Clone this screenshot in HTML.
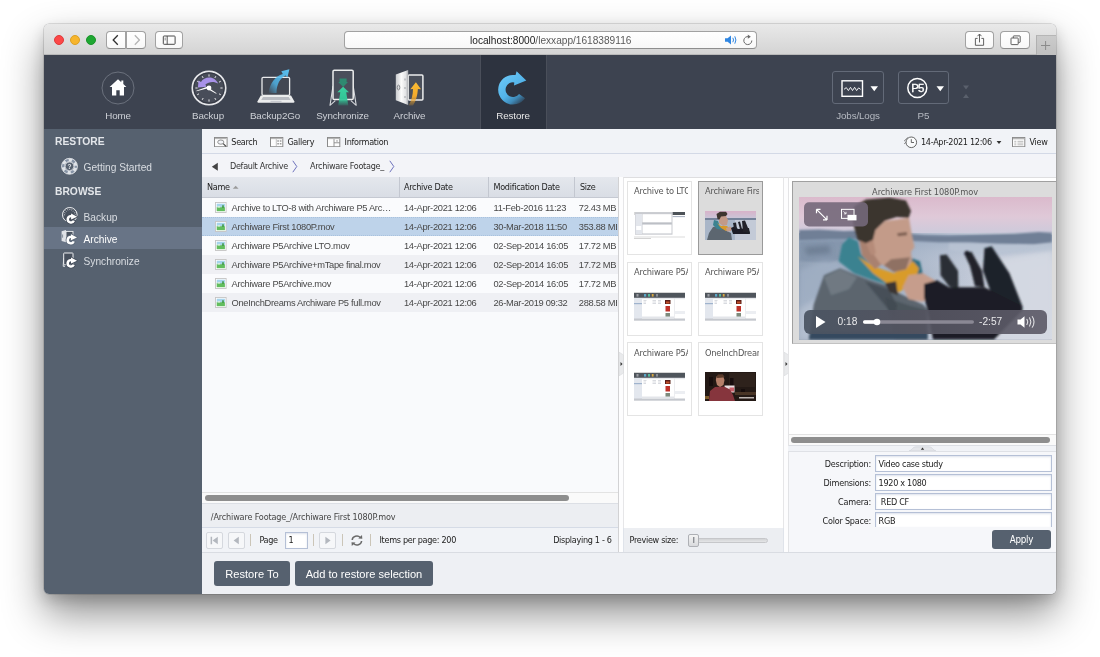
<!DOCTYPE html>
<html lang="en">
<head>
<meta charset="utf-8">
<title>Archiware P5 - Restore</title>
<style>
html,body{margin:0;padding:0;background:#fff;}
body{width:1100px;height:657px;overflow:hidden;position:relative;font-family:"Liberation Sans",sans-serif;}
#win{position:absolute;left:44px;top:24.4px;width:1012px;height:569.6px;border-radius:5px;overflow:hidden;background:#eef0f4;
 box-shadow:0 0 0 .5px rgba(0,0,0,.22),0 20px 40px rgba(0,0,0,.44),0 6px 14px rgba(0,0,0,.16);}
#pg{position:absolute;left:-44px;top:-24.4px;width:1100px;height:657px;will-change:transform;}
#pg div,#pg span,#pg svg{position:absolute;box-sizing:border-box;}
.t{white-space:nowrap;line-height:1;}
.th{font-family:"DejaVu Sans Condensed","DejaVu Sans","Liberation Sans",sans-serif;}
/* title bar */
#tb{left:44px;top:24px;width:1012px;height:31px;background:linear-gradient(#e9e9e9,#d4d4d4);border-bottom:1px solid #b9b9b9;}
.tl{width:10px;height:10px;border-radius:50%;top:35px;}
.sbtn{background:linear-gradient(#fff,#f8f8f8);border:1px solid #a2a2a2;border-bottom-color:#8e8e8e;border-radius:4px;}
/* header */
#hd{left:44px;top:55px;width:1012px;height:74px;background:#3d4350;}
.hl{color:#cdd0d6;font-size:9.8px;letter-spacing:-0.12px;top:110.8px;width:80px;text-align:center;}
/* sidebar */
#sb{left:44px;top:129px;width:158px;height:465px;background:#56616f;}
.sh{color:#e3e6ea;font-weight:bold;font-size:10.3px;left:55px;}
.si{color:#d9dde2;font-size:10.2px;left:83.5px;}
/* content */
#ct{left:202px;top:129px;width:854px;height:465px;background:#f1f3f7;}
.tbt{font-size:9px;letter-spacing:-0.3px;color:#222;}
.row{left:202px;width:416px;height:19.2px;}
.c{font-size:9.3px;letter-spacing:-0.3px;color:#484848;}
.ch{font-size:9px;letter-spacing:-0.3px;color:#222;top:183.2px;}
.thumb{width:65px;height:74px;border:1px solid #e4e4e4;background:#fff;overflow:hidden;}
.thumb .t{left:6px;top:4.4px;font-size:9.2px;letter-spacing:-0.2px;color:#555;width:54px;overflow:hidden;}
.ti{left:6px;top:29px;width:51px;height:29px;}
.lbl{font-size:9px;letter-spacing:-0.22px;color:#222;width:80px;text-align:right;left:791px;}
.inp{left:875px;width:177px;height:17px;background:#fff;border:1px solid #b5c0d6;box-shadow:inset 0 1px 2px rgba(120,140,180,.25);}
.inpt{font-size:9px;letter-spacing:-0.3px;color:#222;}
.btn{background:#56616f;border-radius:3px;color:#fff;font-size:11.1px;text-align:center;}
.sep{width:1px;height:12px;top:534px;background:#cbc5b8;}
.pb{width:17px;height:17px;top:531.5px;border:1px solid #d5d8de;border-radius:2px;background:#f6f7f9;}
</style>
</head>
<body>
<div id="win"><div id="pg">

<!-- ===== TITLE BAR ===== -->
<div id="tb"></div>
<div class="tl" style="left:53.9px;background:#fc4848;border:0.5px solid #df3a3a;"></div>
<div class="tl" style="left:70.3px;background:#f7b52c;border:0.5px solid #dba023;"></div>
<div class="tl" style="left:86px;background:#1ea732;border:0.5px solid #199329;"></div>
<div class="sbtn" style="left:106px;top:31px;width:20px;height:17.5px;border-radius:4px 0 0 4px;"></div>
<div class="sbtn" style="left:125.5px;top:31px;width:20.5px;height:17.5px;border-radius:0 4px 4px 0;"></div>
<div class="sbtn" style="left:154.5px;top:31px;width:28.5px;height:17.5px;"></div>
<div class="sbtn" style="left:344px;top:31px;width:412.5px;height:17.5px;"></div>
<div class="t" style="left:470px;top:36px;font-size:10.15px;color:#1a1a1a;">localhost:8000<span style="position:static;color:#5a5a5a;">/lexxapp/1618389116</span></div>
<div class="sbtn" style="left:965px;top:31px;width:29px;height:17.5px;"></div>
<div class="sbtn" style="left:1000px;top:31px;width:29.5px;height:17.5px;"></div>
<div style="left:1036px;top:35px;width:20px;height:20px;background:linear-gradient(#cbcbcb,#c0c0c0);border-left:1px solid #b0b0b0;border-top:1px solid #b6b6b6;"></div>

<!-- titlebar icons -->
<svg style="left:106px;top:31px;" width="41" height="18" viewBox="0 0 41 18">
 <path d="M11.800 4.300 L7.200 9 L11.800 13.700" fill="none" stroke="#303030" stroke-width="1.300"/>
 <path d="M28.800 4.300 L33.400 9 L28.800 13.700" fill="none" stroke="#b4b4b4" stroke-width="1.300"/>
</svg>
<svg style="left:155px;top:31px;" width="29" height="18" viewBox="0 0 29 18">
 <rect x="8.300" y="5" width="11.800" height="8.300" rx=".8" fill="none" stroke="#4a4a4a" stroke-width="1"/>
 <path d="M12.200 5 V13.300" stroke="#4a4a4a" stroke-width=".9"/>
 <path d="M9.500 7.200h1.500M9.500 8.800h1.500" stroke="#4a4a4a" stroke-width=".6"/>
</svg>
<svg style="left:724px;top:33px;" width="16" height="14" viewBox="0 0 16 14">
 <path d="M1 5.300 L3.600 5.300 L7 2.500 L7 11.500 L3.600 8.700 L1 8.700 Z" fill="#2f86e2"/>
 <path d="M8.800 4.800 Q10.300 7 8.800 9.200 M10.800 3.300 Q13 7 10.800 10.700" fill="none" stroke="#2f86e2" stroke-width="1"/>
</svg>
<svg style="left:742px;top:34px;" width="12" height="13" viewBox="0 0 12 13">
 <path d="M9.800 6.500 A4 4 0 1 1 6.800 2.700" fill="none" stroke="#6a6a6a" stroke-width="1"/>
 <path d="M5.800 .6 L8.800 2.700 L5.800 4.800 Z" fill="#6a6a6a"/>
</svg>
<svg style="left:966px;top:31px;" width="28" height="18" viewBox="0 0 28 18">
 <path d="M11.600 7.400 L9.400 7.400 L9.400 14.300 L17.600 14.300 L17.600 7.400 L15.400 7.400" fill="none" stroke="#505050" stroke-width=".9"/>
 <path d="M13.500 11.400 V3.200 M11.500 5.200 L13.500 3 L15.500 5.200" fill="none" stroke="#505050" stroke-width=".9"/>
</svg>
<svg style="left:1001px;top:31px;" width="29" height="18" viewBox="0 0 29 18">
 <path d="M12.300 7 L12.300 5.400 Q12.300 4.900 12.800 4.900 L18.700 4.900 Q19.200 4.900 19.200 5.400 L19.200 10.900 Q19.200 11.400 18.700 11.400 L17.300 11.400" fill="none" stroke="#505050" stroke-width=".9"/>
 <rect x="10" y="7" width="7.200" height="6.600" rx=".6" fill="#fff" stroke="#505050" stroke-width=".9"/>
</svg>
<svg style="left:1040px;top:40px;" width="11" height="11" viewBox="0 0 11 11"><path d="M5.600 1 V10 M1 5.500 H10.200" stroke="#8a8a8a" stroke-width="1"/></svg>

<!-- ===== HEADER ===== -->
<div id="hd"></div>
<div style="left:480px;top:55px;width:66.5px;height:74px;background:#2d333f;border-left:1px solid #4a4f5a;border-right:1px solid #4a4f5a;"></div>
<div class="t hl" style="left:78px;">Home</div>
<div class="t hl" style="left:168px;">Backup</div>
<div class="t hl" style="left:235px;">Backup2Go</div>
<div class="t hl" style="left:302.5px;">Synchronize</div>
<div class="t hl" style="left:369.5px;">Archive</div>
<div class="t hl" style="left:473px;color:#e6e6e6;">Restore</div>
<div class="t hl" style="left:818px;color:#b6bac2;">Jobs/Logs</div>
<div class="t hl" style="left:883.4px;color:#b6bac2;">P5</div>
<div style="left:832px;top:71px;width:52px;height:33px;border:1px solid #636a78;border-radius:3px;"></div>
<div style="left:898px;top:71px;width:51px;height:33px;border:1px solid #636a78;border-radius:3px;"></div>

<!-- header icons -->
<svg style="left:100px;top:70px;" width="36" height="36" viewBox="0 0 36 36">
 <circle cx="18" cy="18" r="16" fill="none" stroke="#6b717d" stroke-width="1"/>
 <path d="M18 9.2 L9.6 17 L12 17 L12 25.6 L16.3 25.6 L16.3 20.2 L19.7 20.2 L19.7 25.6 L24 25.6 L24 17 L26.4 17 L23.3 14.1 L23.3 10.6 L21.3 10.6 L21.3 12.3 Z" fill="#fff"/>
</svg>
<svg style="left:189px;top:68px;" width="40" height="40" viewBox="0 0 40 40">
 <circle cx="20" cy="20" r="16.7" fill="#484d59" stroke="#e6e7ea" stroke-width="1.700"/>
 <circle cx="20" cy="20" r="15.2" fill="none" stroke="#353944" stroke-width="1"/>
 <g stroke="#e8e8ea" stroke-width="1">
  <path d="M20 6.4v2.2M20 31.4v2.2M6.4 20h2.2M31.4 20h2.2M13.2 8.2l1 1.8M25.8 30l1 1.8M8.2 13.2l1.8 1M30 25.8l1.8 1M26.8 8.2l-1 1.8M14.2 30l-1 1.800M31.800 13.2l-1.8 1M10 25.8l-1.800 1"/>
 </g>
 <path d="M8.900 19.400 L9.600 12.400 L12 14 C15 9 24.500 6.800 29.200 15.600 C24.500 12.800 19.500 14 16.400 16.600 L17.400 18.800 Z" fill="#a892e8"/>
 <path d="M20 20 L7.500 23.300 L7.300 22.700 L19.500 18.300 Z" fill="#fff"/>
 <path d="M20 20 L27.600 25.200 L27.200 25.800 L19 21.200 Z" fill="#fff"/>
 <circle cx="20" cy="20" r="2.400" fill="#fff"/>
</svg>
<svg style="left:255px;top:66px;" width="42" height="40" viewBox="0 0 42 40">
 <rect x="7" y="11.300" width="27.600" height="18" rx="1.200" fill="#424752" stroke="#e9eaec" stroke-width="1.300"/>
 <path d="M5.800 29.500 L36 29.500 L39.400 35.600 Q39.600 36.800 38.400 36.800 L3.400 36.800 Q2.200 36.800 2.400 35.600 Z" fill="#eceded"/>
 <path d="M8 31 L33.800 31 L35.600 34 L6.200 34 Z" fill="#b9bcc2"/>
 <rect x="15.500" y="34.800" width="11" height="1.200" fill="#c8cad0"/>
 <defs><linearGradient id="g2go" x1="0" y1="1" x2="1" y2="0"><stop offset="0" stop-color="#4fb6ea" stop-opacity="0"/><stop offset=".35" stop-color="#4fb6ea" stop-opacity=".8"/><stop offset="1" stop-color="#5cc3f2"/></linearGradient></defs>
 <path d="M13.500 27 C15 17 20 10.500 27.800 8 L26.300 5.300 L34.400 3.300 L32.400 11.600 L30.500 9.600 C25 12.500 21.500 18.500 21.500 27 Z" fill="url(#g2go)"/>
</svg>
<svg style="left:322px;top:66px;" width="42" height="42" viewBox="0 0 42 42">
 <defs><linearGradient id="gsyn" x1="0" y1="0" x2="0" y2="1"><stop offset="0" stop-color="#3bd2a0"/><stop offset=".65" stop-color="#31c596"/><stop offset="1" stop-color="#31c596" stop-opacity=".15"/></linearGradient></defs>
 <path d="M11 20 L8 39.300 L13.300 34.700 M31.200 20 L34.200 39.300 L28.900 34.700" fill="none" stroke="#d5d7db" stroke-width="1.100" stroke-linejoin="round"/>
 <rect x="11" y="4.200" width="20.200" height="29.400" rx="1.300" fill="#4a4f5b" stroke="#eceded" stroke-width="1.500"/>
 <path d="M17.600 12.400 L24.600 12.400 L24.600 16 L26 16 L21.100 21 L16.200 16 L17.600 16 Z" fill="#2f8a71"/>
 <path d="M21.100 20.700 L27 26.200 L24.200 26.200 L26.300 39.600 L16.200 39.600 L18.300 26.200 L15.300 26.200 Z" fill="url(#gsyn)"/>
</svg>
<svg style="left:389px;top:66px;" width="42" height="42" viewBox="0 0 42 42">
 <defs><linearGradient id="gdoor" x1="0" y1="0" x2="1" y2="0"><stop offset="0" stop-color="#c9cbce"/><stop offset=".45" stop-color="#fbfbfb"/><stop offset=".8" stop-color="#e2e3e5"/><stop offset="1" stop-color="#a9abb0"/></linearGradient>
 <linearGradient id="garr" x1="0" y1="0" x2="0" y2="1"><stop offset="0" stop-color="#fbbd33"/><stop offset=".6" stop-color="#f2a92c"/><stop offset="1" stop-color="#f0a42a" stop-opacity=".2"/></linearGradient></defs>
 <rect x="19.200" y="9" width="14.700" height="25" rx="1" fill="#4a4f5a" stroke="#eceded" stroke-width="1.500"/>
 <path d="M6.800 8.500 L19.200 3.900 L19.200 39.100 L6.800 34.200 Z" fill="url(#gdoor)"/>
 <ellipse cx="9.500" cy="21.500" rx="1.300" ry="2.400" fill="#d9dadc" stroke="#777a80" stroke-width=".9"/>
 <path d="M16 12.500v2M16 21v2M16 30v2" stroke="#a6a9ae" stroke-width="1.100"/>
 <path d="M26.900 16.200 L32 23.300 L28.900 23 C28.600 29 27 35 24 39.600 L19.600 39.600 C22.800 34 23.900 28.500 24 22.900 L21.300 23.300 Z" fill="url(#garr)"/>
</svg>
<svg style="left:491px;top:66px;" width="44" height="44" viewBox="0 0 44 44">
 <defs><linearGradient id="gres" gradientUnits="userSpaceOnUse" x1="10" y1="6" x2="35" y2="37"><stop offset="0" stop-color="#6ecaf8"/><stop offset=".55" stop-color="#52b3e9"/><stop offset=".75" stop-color="#3f8ab8"/><stop offset=".92" stop-color="#30475c"/><stop offset="1" stop-color="#2e3440"/></linearGradient></defs>
 <path d="M24.570 9.120 A14.800 14.800 0 1 0 34.100 32.200 L28.060 27.940 A7.400 7.400 0 1 1 23.280 16.410 L23 19.600 L35.300 14.400 L25.600 5.300 Z" fill="url(#gres)"/>
</svg>
<!-- jobs/logs + p5 -->
<svg style="left:832px;top:71px;" width="52" height="33" viewBox="0 0 52 33">
 <rect x="10" y="9.800" width="20.500" height="15.500" fill="none" stroke="#fff" stroke-width="1.400"/>
 <path d="M12 18.300 L14.300 16.600 L16.400 19.600 L18.500 16.300 L20.500 19.600 L22.600 16.300 L24.600 19.600 L26.600 16.900 L28.600 18.300" fill="none" stroke="#fff" stroke-width=".9"/>
 <path d="M38.500 15.300 L46 15.300 L42.250 20.300 Z" fill="#fff"/>
</svg>
<svg style="left:898px;top:71px;" width="51" height="33" viewBox="0 0 51 33">
 <circle cx="19.300" cy="17" r="9.500" fill="none" stroke="#fff" stroke-width="1.500"/>
 <text x="19.300" y="21" text-anchor="middle" font-family="Liberation Sans, sans-serif" font-size="11.500" letter-spacing="-1" fill="#fff" stroke="#fff" stroke-width=".35">P5</text>
 <path d="M38.500 15.300 L46 15.300 L42.250 20.300 Z" fill="#fff"/>
</svg>
<svg style="left:961px;top:83px;" width="10" height="18" viewBox="0 0 10 18">
 <path d="M2 2.500 L8 2.500 L5 6.500 Z M2 15 L8 15 L5 11 Z" fill="#5a606c"/>
</svg>

<!-- ===== SIDEBAR ===== -->
<div id="sb"></div>
<div style="left:44px;top:227px;width:158px;height:22px;background:#687486;"></div>
<div class="t sh" style="top:137px;">RESTORE</div>
<div class="t si" style="top:162.6px;">Getting Started</div>
<div class="t sh" style="top:187px;">BROWSE</div>
<div class="t si" style="top:213px;">Backup</div>
<div class="t si" style="top:235px;color:#fff;">Archive</div>
<div class="t si" style="top:257.1px;">Synchronize</div>

<!-- sidebar icons -->
<svg style="left:44px;top:129px;" width="158" height="160" viewBox="44 129 158 160">
 <g>
  <circle cx="69.500" cy="166.300" r="6.300" fill="none" stroke="#dfe3e8" stroke-width="3.400"/>
  <circle cx="69.500" cy="166.300" r="6.300" fill="none" stroke="#8794a6" stroke-width="2.600" stroke-dasharray="3.300 3.300" stroke-dashoffset="1.600"/>
  <circle cx="69.500" cy="166.300" r="8" fill="none" stroke="#e6e9ed" stroke-width=".7"/>
  <circle cx="69.500" cy="166.300" r="4.300" fill="#56616f" stroke="#e6e9ed" stroke-width=".8"/>
  <text x="69.500" y="168.700" text-anchor="middle" font-family="Liberation Sans, sans-serif" font-weight="bold" font-size="6.500" fill="#e6e9ed">?</text>
 </g>
 <g>
  <circle cx="69.800" cy="214.800" r="7.300" fill="#48515e" stroke="#f1f2f4" stroke-width="1"/>
  <path d="M69.800 208.800v1.300M63.800 214.800h1.300M75.800 214.800h-1.300M65.600 210.600l.9.900M74 210.600l-.9.900M64.300 212.500l1.100.5M75.300 212.500l-1.100.5M67.500 209.300l.5 1.100M72.100 209.300l-.5 1.100" stroke="#e6e9ed" stroke-width=".7"/>
  <path transform="translate(70.900 219.300)" d="M0.2 -4.400 A4.400 4.400 0 1 0 4.100 1.700 L1.900 .9 A2 2 0 1 1 .2 -2 L.2 .2 L6.200 -2.600 L.2 -5.900 Z" fill="#fff" stroke="#454e5b" stroke-width="1.600" stroke-linejoin="round" paint-order="stroke"/>
 </g>
 <g>
  <rect x="66" y="231.400" width="7" height="7.800" fill="#4a5360" stroke="#eef0f2" stroke-width=".9"/>
  <path d="M61.600 231.200 L66 230 L66 242.300 L61.600 241.100 Z" fill="#dfe2e7"/>
  <path d="M62.600 234.500v3.200" stroke="#6a7686" stroke-width=".8"/>
  <path transform="translate(70.800 240.100)" d="M0.2 -4.400 A4.400 4.400 0 1 0 4.100 1.700 L1.900 .9 A2 2 0 1 1 .2 -2 L.2 .2 L6.200 -2.600 L.2 -5.900 Z" fill="#fff" stroke="#5d6979" stroke-width="1.600" stroke-linejoin="round" paint-order="stroke"/>
 </g>
 <g>
  <path d="M63.700 258 L63.200 266.300 L65 266.300" fill="none" stroke="#eef0f2" stroke-width=".9"/>
  <rect x="63.700" y="253" width="9.300" height="11.700" rx=".6" fill="#48515e" stroke="#eef0f2" stroke-width="1"/>
  <path transform="translate(70.800 263.300)" d="M0.2 -4.400 A4.400 4.400 0 1 0 4.100 1.700 L1.900 .9 A2 2 0 1 1 .2 -2 L.2 .2 L6.200 -2.600 L.2 -5.900 Z" fill="#fff" stroke="#454e5b" stroke-width="1.600" stroke-linejoin="round" paint-order="stroke"/>
 </g>
</svg>
<!-- ===== CONTENT ===== -->
<div id="ct"></div>
<!-- toolbar -->
<div style="left:202px;top:129px;width:854px;height:25px;background:#f1f3f7;border-bottom:1px solid #d3d9e6;"></div>
<div class="t th tbt" style="left:231.3px;top:137.5px;">Search</div>
<div class="t th tbt" style="left:287.4px;top:137.5px;">Gallery</div>
<div class="t th tbt" style="left:344.6px;top:137.5px;">Information</div>
<div class="t th tbt" style="left:921px;top:137.5px;">14-Apr-2021 12:06</div>
<div class="t th tbt" style="left:1029.5px;top:137.5px;">View</div>
<!-- breadcrumb -->
<div style="left:202px;top:154px;width:854px;height:23px;background:#f3f4f8;"></div>
<div class="t th tbt" style="left:230px;top:161.5px;color:#333;">Default Archive</div>
<div class="t th tbt" style="left:310px;top:161.5px;color:#333;">Archiware Footage_</div>
<!-- grid -->
<div style="left:202px;top:177px;width:416px;height:316px;background:#f9fafc;"></div>
<div style="left:202px;top:177px;width:416px;height:20.5px;background:linear-gradient(#e4e7ed,#d9dde5);border-bottom:1px solid #c5c9d2;"></div>
<div style="left:399px;top:177px;width:1px;height:20px;background:#c3c7d0;"></div>
<div style="left:488px;top:177px;width:1px;height:20px;background:#c3c7d0;"></div>
<div style="left:574px;top:177px;width:1px;height:20px;background:#c3c7d0;"></div>
<div class="t th ch" style="left:207px;">Name</div>
<div class="t th ch" style="left:404px;">Archive Date</div>
<div class="t th ch" style="left:493.5px;">Modification Date</div>
<div class="t th ch" style="left:580px;">Size</div>
<div class="row" style="top:197.5px;height:19.5px;background:#fafbfd;"></div>
<div class="row" style="top:217.0px;height:19.0px;background:#bed3ea;border-top:1px dotted #a9c2de;border-bottom:1px dotted #a9c2de;"></div>
<div class="row" style="top:236.0px;height:19.0px;background:#fafbfd;"></div>
<div class="row" style="top:255.0px;height:19.3px;background:#eff0f4;"></div>
<div class="row" style="top:274.3px;height:18.7px;background:#fafbfd;"></div>
<div class="row" style="top:293.0px;height:19.3px;background:#eff0f4;"></div>
<svg style="left:215px;top:202.0px;" width="12" height="11" viewBox="0 0 12 11"><rect x=".5" y=".5" width="10.600" height="10" fill="#fff" stroke="#c4c4c4" stroke-width=".9"/><rect x="1.700" y="1.700" width="8.200" height="3.800" fill="#a5d3ec"/><rect x="1.700" y="5.200" width="8.200" height="4" fill="#62bd5e"/><path d="M7.200 3.200h1.600v2.800h-1.600z" fill="#3f9a45"/><path d="M2.600 4h2.600v1.600h-2.600z" fill="#d4ecd9"/></svg>
<div class="t c" style="left:231.5px;top:204px;">Archive to LTO-8 with Archiware P5 Arc…</div>
<div class="t c" style="left:404px;top:204px;">14-Apr-2021 12:06</div>
<div class="t c" style="left:493.5px;top:204px;">11-Feb-2016 11:23</div>
<div class="t c" style="left:578.8px;top:204px;width:38.5px;overflow:hidden;">72.43 MB</div>
<svg style="left:215px;top:221.0px;" width="12" height="11" viewBox="0 0 12 11"><rect x=".5" y=".5" width="10.600" height="10" fill="#fff" stroke="#c4c4c4" stroke-width=".9"/><rect x="1.700" y="1.700" width="8.200" height="3.800" fill="#a5d3ec"/><rect x="1.700" y="5.200" width="8.200" height="4" fill="#62bd5e"/><path d="M7.200 3.200h1.600v2.800h-1.600z" fill="#3f9a45"/><path d="M2.600 4h2.600v1.600h-2.600z" fill="#d4ecd9"/></svg>
<div class="t c" style="left:231.5px;top:223px;">Archiware First 1080P.mov</div>
<div class="t c" style="left:404px;top:223px;">14-Apr-2021 12:06</div>
<div class="t c" style="left:493.5px;top:223px;">30-Mar-2018 11:50</div>
<div class="t c" style="left:578.8px;top:223px;width:38.5px;overflow:hidden;">353.88 MB</div>
<svg style="left:215px;top:240.0px;" width="12" height="11" viewBox="0 0 12 11"><rect x=".5" y=".5" width="10.600" height="10" fill="#fff" stroke="#c4c4c4" stroke-width=".9"/><rect x="1.700" y="1.700" width="8.200" height="3.800" fill="#a5d3ec"/><rect x="1.700" y="5.200" width="8.200" height="4" fill="#62bd5e"/><path d="M7.200 3.200h1.600v2.800h-1.600z" fill="#3f9a45"/><path d="M2.600 4h2.600v1.600h-2.600z" fill="#d4ecd9"/></svg>
<div class="t c" style="left:231.5px;top:242px;">Archiware P5Archive LTO.mov</div>
<div class="t c" style="left:404px;top:242px;">14-Apr-2021 12:06</div>
<div class="t c" style="left:493.5px;top:242px;">02-Sep-2014 16:05</div>
<div class="t c" style="left:578.8px;top:242px;width:38.5px;overflow:hidden;">17.72 MB</div>
<svg style="left:215px;top:259.0px;" width="12" height="11" viewBox="0 0 12 11"><rect x=".5" y=".5" width="10.600" height="10" fill="#fff" stroke="#c4c4c4" stroke-width=".9"/><rect x="1.700" y="1.700" width="8.200" height="3.800" fill="#a5d3ec"/><rect x="1.700" y="5.200" width="8.200" height="4" fill="#62bd5e"/><path d="M7.200 3.200h1.600v2.800h-1.600z" fill="#3f9a45"/><path d="M2.600 4h2.600v1.600h-2.600z" fill="#d4ecd9"/></svg>
<div class="t c" style="left:231.5px;top:261px;">Archiware P5Archive+mTape final.mov</div>
<div class="t c" style="left:404px;top:261px;">14-Apr-2021 12:06</div>
<div class="t c" style="left:493.5px;top:261px;">02-Sep-2014 16:05</div>
<div class="t c" style="left:578.8px;top:261px;width:38.5px;overflow:hidden;">17.72 MB</div>
<svg style="left:215px;top:278.0px;" width="12" height="11" viewBox="0 0 12 11"><rect x=".5" y=".5" width="10.600" height="10" fill="#fff" stroke="#c4c4c4" stroke-width=".9"/><rect x="1.700" y="1.700" width="8.200" height="3.800" fill="#a5d3ec"/><rect x="1.700" y="5.200" width="8.200" height="4" fill="#62bd5e"/><path d="M7.200 3.200h1.600v2.800h-1.600z" fill="#3f9a45"/><path d="M2.600 4h2.600v1.600h-2.600z" fill="#d4ecd9"/></svg>
<div class="t c" style="left:231.5px;top:280px;">Archiware P5Archive.mov</div>
<div class="t c" style="left:404px;top:280px;">14-Apr-2021 12:06</div>
<div class="t c" style="left:493.5px;top:280px;">02-Sep-2014 16:05</div>
<div class="t c" style="left:578.8px;top:280px;width:38.5px;overflow:hidden;">17.72 MB</div>
<svg style="left:215px;top:297.0px;" width="12" height="11" viewBox="0 0 12 11"><rect x=".5" y=".5" width="10.600" height="10" fill="#fff" stroke="#c4c4c4" stroke-width=".9"/><rect x="1.700" y="1.700" width="8.200" height="3.800" fill="#a5d3ec"/><rect x="1.700" y="5.200" width="8.200" height="4" fill="#62bd5e"/><path d="M7.200 3.200h1.600v2.800h-1.600z" fill="#3f9a45"/><path d="M2.600 4h2.600v1.600h-2.600z" fill="#d4ecd9"/></svg>
<div class="t c" style="left:231.5px;top:299px;">OneInchDreams Archiware P5 full.mov</div>
<div class="t c" style="left:404px;top:299px;">14-Apr-2021 12:06</div>
<div class="t c" style="left:493.5px;top:299px;">26-Mar-2019 09:32</div>
<div class="t c" style="left:578.8px;top:299px;width:38.5px;overflow:hidden;">288.58 MB</div>
<!-- grid hscroll + path + paging -->
<div style="left:202px;top:492px;width:416px;height:11.5px;background:#fafafa;border-top:1px solid #e3e3e3;border-bottom:1px solid #dcdfe5;"></div>
<div style="left:204.5px;top:495.2px;width:364px;height:6px;border-radius:3px;background:#8e8e8e;"></div>
<div style="left:202px;top:503.5px;width:416px;height:24px;background:#eceef2;border-bottom:1px solid #d5dbe6;"></div>
<div class="t th tbt" style="left:210.8px;top:513.2px;color:#444;letter-spacing:-0.15px;">/Archiware Footage_/Archiware First 1080P.mov</div>
<div style="left:202px;top:528px;width:416px;height:24px;background:#f1f3f7;"></div>
<div class="pb" style="left:205.5px;"></div>
<div class="pb" style="left:227.8px;"></div>
<div class="sep" style="left:250px;"></div>
<div class="t th tbt" style="left:259.4px;top:535.5px;">Page</div>
<div style="left:284.5px;top:531.5px;width:23.5px;height:17px;background:#fff;border:1px solid #b5c0d6;box-shadow:inset 0 1px 2px rgba(120,140,180,.25);"></div>
<div class="t th tbt" style="left:288.5px;top:536.3px;">1</div>
<div class="sep" style="left:313px;"></div>
<div class="pb" style="left:319px;"></div>
<div class="sep" style="left:341.5px;"></div>
<div class="sep" style="left:370px;"></div>
<div class="t th tbt" style="left:379.5px;top:535.5px;">Items per page: 200</div>
<div class="t th tbt" style="left:553.2px;top:535.5px;">Displaying 1 - 6</div>
<div style="left:618px;top:177px;width:5px;height:375px;background:#fdfdfe;border-left:1px solid #d2d2d4;"></div>
<!-- gallery -->
<div style="left:622.5px;top:177px;width:161.5px;height:351px;background:#fff;border-left:1px solid #e6e6e8;border-right:1px solid #e6e6e8;border-top:1px solid #dedee0;"></div>
<div class="thumb" style="left:627px;top:181.0px;"><div class="t th">Archive to LTO-8 with</div><div class="ti"><svg style="left:0;top:0;" width="51" height="29" viewBox="0 0 51 29"><defs><filter id="tb0" x="-5%" y="-5%" width="110%" height="110%"><feGaussianBlur stdDeviation=".45"/></filter></defs><rect width="51" height="29" fill="#fff"/><g filter="url(#tb0)">
<rect x="0" y="1" width="51" height="3" fill="#d9d9d9"/><rect x="38.500" y="1" width="12.500" height="3" fill="#4e5259"/><rect x="38.500" y="5.200" width="12.500" height=".9" fill="#9aa4b5"/>
<rect x="1" y="1.200" width="37.500" height="22.500" fill="#c9cbd0"/><rect x="1.500" y="3" width="6.500" height="20" fill="#e3e6ec"/><rect x="8.500" y="3.200" width="29" height="8" fill="#fff"/><rect x="8.500" y="12.200" width="29" height="1.200" fill="#b9bcc2"/><rect x="8.500" y="13.600" width="29" height="8.800" fill="#fff"/>
<rect x="2.200" y="15" width="5" height="4" fill="#fff"/><rect x="0" y="25.500" width="51" height="1" fill="#dcdcdc"/><rect x="0" y="27" width="17" height=".8" fill="#c9c9c9"/></g></svg></div></div>
<div class="thumb" style="left:698px;top:181.0px;background:#dcdcdc;border-color:#9a9a9a;"><div class="t th">Archiware First 1080P</div><div class="ti"><svg style="left:0;top:0;" width="51" height="29" viewBox="0 0 51 29"><defs><filter id="tb1" x="-5%" y="-5%" width="110%" height="110%"><feGaussianBlur stdDeviation=".45"/></filter><linearGradient id="tsky" x1="0" y1="0" x2="0" y2="1"><stop offset="0" stop-color="#d8b3c9"/><stop offset="1" stop-color="#c9c6d8"/></linearGradient></defs><rect width="51" height="29" fill="#a9b6c8"/><rect width="51" height="7.500" fill="url(#tsky)"/><g filter="url(#tb1)">
<rect x="0" y="7" width="51" height="2" fill="#74839a"/><rect x="30" y="9" width="21" height="20" fill="#c9cfdb" opacity=".8"/>
<path d="M2 29 L4 22 L8 16 L14 15 L22 20 L26 22 L27 29 Z" fill="#5c666f"/><path d="M9 9 L13 10 L15 16 L18 19 L12 18 L8 14 Z" fill="#3b8391"/><path d="M12 12 L16 15 L22 15 L24 17 L21 20 L16 17 Z" fill="#d79a2c"/>
<path d="M14 5 L21 4.800 L23 9 L22 14 L18 15 L14 12 Z" fill="#c29a88"/><path d="M11.500 3 L15 .8 L21 .8 L22.500 3 L21 5 L16 5.500 L14.500 8.500 L12.500 8 Z" fill="#3c352f"/>
<path d="M21 17 L25 15.500 L27 17 L26 20 L22 20.500 Z" fill="#c59c8b"/>
<path d="M26 17 L30 15 L33 18 L44 17 L45 23 L28 23 Z" fill="#1c1f26"/><path d="M28 12 L31 11.500 L32 18 L29 17 Z M33 11 L35 10.500 L37 18 L35 18 Z M37 10 L40 9.500 L45 22 L38 21 Z" fill="#20232b"/></g></svg></div></div>
<div class="thumb" style="left:627px;top:261.6px;"><div class="t th">Archiware P5Archive LTO</div><div class="ti"><svg style="left:0;top:0;" width="51" height="29" viewBox="0 0 51 29"><defs><filter id="tb2" x="-5%" y="-5%" width="110%" height="110%"><feGaussianBlur stdDeviation=".45"/></filter></defs><rect width="51" height="29" fill="#fff"/><g filter="url(#tb2)">
<rect x="0" y="0" width="51" height="1" fill="#d5d5d5"/><rect x="0" y="1" width="51" height="4.800" fill="#50545c"/><rect x="2.500" y="2" width="2" height="2.600" fill="#9a9da3"/><rect x="10" y="2" width="2.200" height="2.600" fill="#5aa7c9"/><rect x="14" y="2" width="2" height="2.600" fill="#57b99a"/><rect x="17.800" y="2" width="1.800" height="2.600" fill="#d9a83f"/><rect x="22" y="2" width="2" height="2.600" fill="#8a8d94"/>
<rect x="0" y="6" width="8" height="21" fill="#e3e7ee"/><rect x="0" y="11" width="8" height="1.200" fill="#9fb3cd"/><rect x="8" y="6" width="43" height="1.200" fill="#e6e8ec"/>
<path d="M9.500 8.500h3M18.500 8.500h3.500M24 8.500h3M9.500 10h2.500M18.500 10h3.500M24 10h3M9.500 11.500h2.500M18.500 11.500h3.500M24 11.500h3" stroke="#c9ccd3" stroke-width=".7"/>
<rect x="31" y="8" width="5.500" height="4" fill="#5a1f18"/><rect x="32" y="9.500" width="3.500" height="2" fill="#c2502a"/><rect x="31.500" y="14" width="4.500" height="5.500" fill="#c0302b"/><rect x="31.500" y="21" width="4.500" height="4.500" fill="#7d8a7b"/>
<rect x="40" y="6" width=".6" height="21" fill="#dfe2e7"/><rect x="41" y="19" width="10" height="3" fill="#eceef2"/><rect x="0" y="26.500" width="51" height="2.200" fill="#c5c8ce"/><rect x="8" y="24.500" width="32" height="1.600" fill="#e3e5ea"/></g></svg></div></div>
<div class="thumb" style="left:698px;top:261.6px;"><div class="t th">Archiware P5Archive+m</div><div class="ti"><svg style="left:0;top:0;" width="51" height="29" viewBox="0 0 51 29"><defs><filter id="tb3" x="-5%" y="-5%" width="110%" height="110%"><feGaussianBlur stdDeviation=".45"/></filter></defs><rect width="51" height="29" fill="#fff"/><g filter="url(#tb3)">
<rect x="0" y="0" width="51" height="1" fill="#d5d5d5"/><rect x="0" y="1" width="51" height="4.800" fill="#50545c"/><rect x="2.500" y="2" width="2" height="2.600" fill="#9a9da3"/><rect x="10" y="2" width="2.200" height="2.600" fill="#5aa7c9"/><rect x="14" y="2" width="2" height="2.600" fill="#57b99a"/><rect x="17.800" y="2" width="1.800" height="2.600" fill="#d9a83f"/><rect x="22" y="2" width="2" height="2.600" fill="#8a8d94"/>
<rect x="0" y="6" width="8" height="21" fill="#e3e7ee"/><rect x="0" y="11" width="8" height="1.200" fill="#9fb3cd"/><rect x="8" y="6" width="43" height="1.200" fill="#e6e8ec"/>
<path d="M9.500 8.500h3M18.500 8.500h3.500M24 8.500h3M9.500 10h2.500M18.500 10h3.500M24 10h3M9.500 11.500h2.500M18.500 11.500h3.500M24 11.500h3" stroke="#c9ccd3" stroke-width=".7"/>
<rect x="31" y="8" width="5.500" height="4" fill="#5a1f18"/><rect x="32" y="9.500" width="3.500" height="2" fill="#c2502a"/><rect x="31.500" y="14" width="4.500" height="5.500" fill="#c0302b"/><rect x="31.500" y="21" width="4.500" height="4.500" fill="#7d8a7b"/>
<rect x="40" y="6" width=".6" height="21" fill="#dfe2e7"/><rect x="41" y="19" width="10" height="3" fill="#eceef2"/><rect x="0" y="26.500" width="51" height="2.200" fill="#c5c8ce"/><rect x="8" y="24.500" width="32" height="1.600" fill="#e3e5ea"/></g></svg></div></div>
<div class="thumb" style="left:627px;top:342.2px;"><div class="t th">Archiware P5Archive.mov</div><div class="ti"><svg style="left:0;top:0;" width="51" height="29" viewBox="0 0 51 29"><defs><filter id="tb4" x="-5%" y="-5%" width="110%" height="110%"><feGaussianBlur stdDeviation=".45"/></filter></defs><rect width="51" height="29" fill="#fff"/><g filter="url(#tb4)">
<rect x="0" y="0" width="51" height="1" fill="#d5d5d5"/><rect x="0" y="1" width="51" height="4.800" fill="#50545c"/><rect x="2.500" y="2" width="2" height="2.600" fill="#9a9da3"/><rect x="10" y="2" width="2.200" height="2.600" fill="#5aa7c9"/><rect x="14" y="2" width="2" height="2.600" fill="#57b99a"/><rect x="17.800" y="2" width="1.800" height="2.600" fill="#d9a83f"/><rect x="22" y="2" width="2" height="2.600" fill="#8a8d94"/>
<rect x="0" y="6" width="8" height="21" fill="#e3e7ee"/><rect x="0" y="11" width="8" height="1.200" fill="#9fb3cd"/><rect x="8" y="6" width="43" height="1.200" fill="#e6e8ec"/>
<path d="M9.500 8.500h3M18.500 8.500h3.500M24 8.500h3M9.500 10h2.500M18.500 10h3.500M24 10h3M9.500 11.500h2.500M18.500 11.500h3.500M24 11.500h3" stroke="#c9ccd3" stroke-width=".7"/>
<rect x="31" y="8" width="5.500" height="4" fill="#5a1f18"/><rect x="32" y="9.500" width="3.500" height="2" fill="#c2502a"/><rect x="31.500" y="14" width="4.500" height="5.500" fill="#c0302b"/><rect x="31.500" y="21" width="4.500" height="4.500" fill="#7d8a7b"/>
<rect x="40" y="6" width=".6" height="21" fill="#dfe2e7"/><rect x="41" y="19" width="10" height="3" fill="#eceef2"/><rect x="0" y="26.500" width="51" height="2.200" fill="#c5c8ce"/><rect x="8" y="24.500" width="32" height="1.600" fill="#e3e5ea"/></g></svg></div></div>
<div class="thumb" style="left:698px;top:342.2px;"><div class="t th">OneInchDreams Archiware</div><div class="ti"><svg style="left:0;top:0;" width="51" height="29" viewBox="0 0 51 29"><defs><filter id="tb5" x="-5%" y="-5%" width="110%" height="110%"><feGaussianBlur stdDeviation=".45"/></filter></defs><rect width="51" height="29" fill="#231915"/><g filter="url(#tb5)">
<rect x="24" y="1" width="26" height="14" fill="#2e221d"/><rect x="4" y="5" width="4" height="9" fill="#17110f"/><rect x="25" y="6" width="3.500" height="8" fill="#17110f"/>
<rect x="19.500" y="13.500" width="10" height="7" fill="#e9dfe2"/><rect x="24.500" y="15.500" width="4.500" height="4" fill="#c8606a"/>
<rect x="30" y="20" width="21" height="3" fill="#4a3527"/><rect x="36" y="17" width="4" height="3" fill="#15100e"/>
<path d="M4 29 L5 19 L10 15 L19 14.500 L25 17.500 L28 23 L30 29 Z" fill="#86353c"/>
<path d="M11.500 4.500 L18 4 L19.500 8 L18.500 13 L15 15 L12 13 L10.800 8 Z" fill="#b5806a"/><path d="M11 5 L13 2.500 L17.500 2.300 L19.500 4.500 L18 5.500 L12.500 6 Z" fill="#5a3a2a"/>
<rect x="0" y="24" width="4" height="3" fill="#7b5a2c"/><rect x="34" y="25" width="15" height="1.500" fill="#bdb6b3"/></g></svg></div></div>
<div style="left:622.5px;top:528px;width:161.5px;height:24px;background:#eceef2;border-left:1px solid #dfe3ea;border-right:1px solid #dfe3ea;"></div>
<div class="t th tbt" style="left:629.5px;top:535.5px;">Preview size:</div>
<div style="left:689px;top:537.5px;width:79px;height:5px;border:1px solid #c6c7ca;border-radius:2.5px;background:linear-gradient(#d2d3d5,#e4e5e7);"></div>
<div style="left:688px;top:533.5px;width:11px;height:13px;border:1px solid #aeb0b5;border-radius:2px;background:linear-gradient(#f4f4f4,#d9dadd);"></div><div style="left:692.6px;top:537px;width:1px;height:6px;background:#8d8f94;"></div><div style="left:694.4px;top:537px;width:1px;height:6px;background:#c2c4c8;"></div>
<div style="left:784px;top:177px;width:4.5px;height:375px;background:#fdfdfe;border-top:1px solid #dedee0;"></div>
<svg style="left:618.5px;top:352px;" width="5" height="24" viewBox="0 0 5 24"><path d="M0 0 L4.500 3 L4.500 21 L0 24 Z" fill="#e9eaec" stroke="#d5d6d9" stroke-width=".5"/><path d="M1.500 10 L3.500 12 L1.500 14 Z" fill="#333"/></svg>
<svg style="left:784px;top:352px;" width="5" height="24" viewBox="0 0 5 24"><path d="M0 0 L4.500 3 L4.500 21 L0 24 Z" fill="#e9eaec" stroke="#d5d6d9" stroke-width=".5"/><path d="M1.500 10 L3.500 12 L1.500 14 Z" fill="#333"/></svg>
<!-- preview -->
<div style="left:788px;top:177px;width:268px;height:269px;background:#fff;border-left:1px solid #e4e4e6;border-top:1px solid #dedee0;"></div>
<div style="left:792px;top:181px;width:264px;height:163px;background:#dcdcdc;border:1px solid #a0a0a0;border-bottom-color:#c2c2c2;border-right:0;"></div>
<div class="t th" style="left:792px;width:266px;text-align:center;top:186.5px;font-size:9.2px;letter-spacing:-0.12px;color:#555;">Archiware First 1080P.mov</div>
<div id="vid" style="left:799px;top:197px;width:253px;height:142.5px;background:#9aa3b0;overflow:hidden;">
<svg id="vidsvg" style="left:0;top:0;" width="253" height="142.5" viewBox="0 0 253 142" preserveAspectRatio="none">
 <defs>
  <linearGradient id="sky" x1="0" y1="0" x2="0" y2="1"><stop offset="0" stop-color="#dbbacc"/><stop offset=".55" stop-color="#dfc9d8"/><stop offset="1" stop-color="#cdcadb"/></linearGradient>
  <linearGradient id="gnd" x1="0" y1="0" x2="1" y2="0"><stop offset="0" stop-color="#8a9ab0"/><stop offset=".4" stop-color="#a3b1c5"/><stop offset=".7" stop-color="#c3cad8"/><stop offset="1" stop-color="#d3d7e1"/></linearGradient>
  <linearGradient id="gnd2" x1="0" y1="0" x2="0" y2="1"><stop offset="0" stop-color="#93a5bd" stop-opacity=".75"/><stop offset=".35" stop-color="#c5cedc" stop-opacity="0"/><stop offset="1" stop-color="#e3e6ec" stop-opacity=".3"/></linearGradient>
  <filter id="b1" x="-10%" y="-10%" width="120%" height="120%"><feGaussianBlur stdDeviation=".9"/></filter>
  <filter id="b2" x="-10%" y="-10%" width="120%" height="120%"><feGaussianBlur stdDeviation="2.400"/></filter>
 </defs>
 <rect width="253" height="142" fill="url(#gnd)"/>
 <rect y="38" width="253" height="104" fill="url(#gnd2)"/>
 <rect width="253" height="36" fill="url(#sky)"/>
 <g filter="url(#b1)">
  <path d="M0 33 L20 32.500 L45 34 L60 33.500 L100 36 L125 38 L150 38.500 L180 37.500 L215 36.500 L240 35 L253 35.500 L253 45 L235 47 L200 46.500 L170 45 L140 45 L110 43.500 L60 42 L30 42 L0 43 Z" fill="#6f7f96"/>
  <path d="M0 44 L40 43 L60 45 L58 58 L30 66 L0 64 Z" fill="#7f90a7" opacity=".75"/>
  <path d="M150 46 L230 48 L253 47 L253 54 L200 58 L150 53 Z" fill="#b9c3d3" opacity=".85"/>
 </g>
 <g filter="url(#b2)">
  <path d="M0 72 L25 64 L45 66 L40 100 L0 112 Z" fill="#a3b1c5" opacity=".8"/>
  <path d="M0 112 L20 100 L14 142 L0 142 Z" fill="#b8c3d3" opacity=".8"/>
  <path d="M196 62 L253 54 L253 142 L200 142 Z" fill="#d4d8e2" opacity=".9"/>
  <path d="M5 50 L30 48 L32 56 L8 58 Z" fill="#5f6f86" opacity=".6"/>
 </g>
 <g filter="url(#b1)">
  <!-- jacket -->
  <path d="M10 142 L14.700 107 L25 78 L41 71 L55 77 L74 84 L90.600 89 L100 96 L124 107 L128.600 111.500 L128.600 142 Z" fill="#5b656e"/>
  <path d="M25 80 L41 72 L58 80 L50 92 L32 98 Z" fill="#6f7982"/>
  <path d="M86 100 L110 108 L126 112 L128 142 L96 142 Z" fill="#4b545c"/>
  <path d="M66 84 L90 92 L98 108 L96 120 Z" fill="#3f474e" opacity=".7"/>
  <path d="M10 142 L11 134 L128.600 134 L128.600 142 Z" fill="#34495f"/>
  <!-- hood teal -->
  <path d="M50 40 L58.600 44 L62 57 L74 71 L90.600 88 L74 83 L55 76 L39.600 64 L43 47.500 Z" fill="#3a8290"/>
  <path d="M110 60 L121 64 L124 78 L116 84 L108 74 Z" fill="#2e6e80"/>
  <!-- yellow collar -->
  <path d="M58.600 59 L74 69 L95 76 L114 64 L120 71 L116 84 L100 95 L90.600 88 L74 76 Z" fill="#d89b2b"/>
  <path d="M86 86 L97 84 L99 98 L91 95 Z" fill="#3a3430"/>
  <!-- face -->
  <path d="M60 42 L76 40 L84 66 L76 72 L63 58 Z" fill="#a9816f"/>
  <path d="M76 33 L86 24 L110 21 L112 33 L115.500 50 L112 54.600 L113 64 L107 72 L95 74.700 L81 66 L67 46 Z" fill="#c39b89"/>
  <path d="M92 62 L111 60 L107 72 L95 74.700 L85 68 Z" fill="#8f7163"/>
  <path d="M67 46 L74 42 L77 56 L72 58 Z" fill="#b58b79"/>
  <path d="M98 36 L108 35 L108 38 L99 39 Z" fill="#6b4f44" opacity=".8"/>
  <!-- hair -->
  <path d="M54 26 L55 9.500 L67 2.400 L90.600 .5 L107 3.600 L112 14 L109.600 21 L97.700 20 L86 23.700 L76.400 33 L74 42.700 L67 46 L58.600 42.700 Z" fill="#3b342e"/>
  <!-- hand -->
  <path d="M103.700 90 L109.600 78 L124 76 L135.700 83 L134.500 95 L124 104.400 L109.600 102 Z" fill="#c69d8c"/>
  <!-- camera -->
  <path d="M141 58 L147.600 57.400 L159 73.500 L159.400 92.500 L150 89 L141.600 78 Z" fill="#2b2e36"/>
  <path d="M165 55.800 L172.500 54.600 L183 73.500 L185.500 90 L176 89 L171 68.800 Z" fill="#20232b"/>
  <path d="M185.500 51 L192.600 49 L210.400 76 L223.500 109 L209 111.500 L197 109 L184 73.500 Z" fill="#1f2229"/>
  <path d="M125 86.600 L138 83 L150 90 L185.500 90 L223.500 109 L223.500 113 L195 142 L134 142 L128.600 112.700 L125 99.600 Z" fill="#1b1e25"/>
  <circle cx="168" cy="56" r="2.400" fill="#1c1f26"/>
 </g>
 <!-- controls -->
 <g transform="translate(0 .8)">
 <rect x="5" y="4.500" width="64" height="24" rx="5" fill="#74687a" opacity=".9"/>
 <path d="M17.500 11.500 L28 22 M17.500 11.500 L17.500 15.500 M17.500 11.500 L21.500 11.500 M28 22 L28 18 M28 22 L24 22" stroke="#fff" stroke-width="1.200" fill="none"/>
 <rect x="42.500" y="11.500" width="12.500" height="9" fill="none" stroke="#fff" stroke-width="1"/>
 <rect x="48.500" y="17" width="9" height="5.500" fill="#fff"/>
 <path d="M44.500 13.500 L47 16 M47 16 L47 14 M47 16 L45 16" stroke="#fff" stroke-width=".8" fill="none"/>
 </g>
 <linearGradient id="barg" x1="0" y1="0" x2="1" y2="0"><stop offset="0" stop-color="#4a5462"/><stop offset=".45" stop-color="#53535f"/><stop offset="1" stop-color="#5e5c69"/></linearGradient><rect x="5" y="112.500" width="243" height="24" rx="6" fill="url(#barg)" opacity=".92"/>
 <path d="M17 118.500 L26.500 124.500 L17 130.500 Z" fill="#fff"/>
 <text x="38.500" y="128" font-family="Liberation Sans, sans-serif" font-size="10.200" fill="#e8e8ea">0:18</text>
 <rect x="64" y="122.800" width="111" height="3.400" rx="1.700" fill="#8a8894"/>
 <rect x="64" y="122.800" width="14" height="3.400" rx="1.700" fill="#fff"/>
 <circle cx="78" cy="124.500" r="3.300" fill="#fff"/>
 <text x="180" y="128" font-family="Liberation Sans, sans-serif" font-size="10.200" fill="#e8e8ea">-2:57</text>
 <path d="M218.500 122 L221.500 122 L225.500 118.800 L225.500 130.200 L221.500 127 L218.500 127 Z" fill="#fff"/>
 <path d="M227.800 121.500 Q229.800 124.500 227.800 127.500 M230.500 120 Q233.300 124.500 230.500 129 M233.200 118.800 Q236.800 124.500 233.200 130.200" stroke="#fff" stroke-width=".9" fill="none"/>
</svg>
</div>
<div style="left:789px;top:433.5px;width:267px;height:12px;background:#fafafa;border-top:1px solid #e3e3e3;border-bottom:1px solid #dcdfe5;"></div>
<div style="left:791px;top:437px;width:259px;height:6.3px;border-radius:3.2px;background:#8e8e8e;"></div>
<div style="left:788px;top:445.5px;width:268px;height:5px;background:#f1f3f7;"></div>
<svg style="left:909px;top:445.5px;" width="27" height="5" viewBox="0 0 27 5"><path d="M0 5 Q2 4.500 3.500 2.500 Q4.800 .8 7 .8 L20 .8 Q22.200 .8 23.500 2.500 Q25 4.500 27 5 Z" fill="#e4e6ea" stroke="#cfd2d8" stroke-width=".6"/><path d="M11.800 3.800 L13.500 1.600 L15.200 3.800 Z" fill="#333"/></svg>
<!-- form -->
<div style="left:788px;top:450.5px;width:268px;height:102px;background:#f6f7fa;border-left:1px solid #e2e3e6;border-top:1px solid #dfe1e6;border-bottom:1px solid #d9dce2;"></div>
<div class="inp" style="top:455.0px;"></div>
<div class="t th lbl" style="top:459.5px;">Description:</div>
<div class="t th inpt" style="left:878.6px;top:459.5px;">Video case study</div>
<div class="inp" style="top:474.1px;"></div>
<div class="t th lbl" style="top:478.5px;">Dimensions:</div>
<div class="t th inpt" style="left:878.6px;top:478.5px;">1920 x 1080</div>
<div class="inp" style="top:493.2px;"></div>
<div class="t th lbl" style="top:497.5px;">Camera:</div>
<div class="t th inpt" style="left:878.6px;top:497.5px;">&nbsp;RED CF</div>
<div class="inp" style="top:512.3px;height:14.5px;border-bottom:0;"></div>
<div class="t th lbl" style="top:516.5px;">Color Space:</div>
<div class="t th inpt" style="left:878.6px;top:516.5px;">RGB</div>
<div class="btn t th" style="left:992px;top:530px;width:59px;height:19px;line-height:20.6px;font-size:9.7px;letter-spacing:-0.2px;">Apply</div>
<!-- bottom buttons -->
<div style="left:202px;top:552px;width:854px;height:42px;background:#eef0f4;border-top:1px solid #d9dce2;"></div>
<div class="btn t" style="left:214px;top:560.5px;width:76px;height:25px;line-height:26.6px;">Restore To</div>
<div class="btn t" style="left:295px;top:560.5px;width:138px;height:25px;line-height:26.6px;">Add to restore selection</div>
<!-- toolbar icons -->
<svg style="left:213.500px;top:136.6px;" width="14" height="10.6" preserveAspectRatio="none" viewBox="0 0 14 11">
 <rect x=".5" y=".5" width="12.600" height="9.600" fill="#fdfdfd" stroke="#8a8a8a" stroke-width="1"/>
 <rect x="1" y="1" width="11.600" height="1.200" fill="#b5b5b5"/>
 <ellipse cx="6.800" cy="5.300" rx="3.100" ry="2.200" fill="#f2f4f8" stroke="#777" stroke-width=".8"/>
 <path d="M9.200 6.900 L12 9.800" stroke="#444" stroke-width="1.200"/>
</svg>
<svg style="left:270px;top:136.6px;" width="14" height="10.6" preserveAspectRatio="none" viewBox="0 0 14 11">
 <rect x=".5" y=".5" width="12.300" height="9.600" fill="#fdfdfd" stroke="#8a8a8a" stroke-width="1"/>
 <rect x="1" y="1" width="11.300" height="1.200" fill="#b5b5b5"/>
 <path d="M7.300 3.400h1.600v1.600h-1.600zM9.800 3.400h1.600v1.600h-1.600zM7.300 6.300h1.600v1.600h-1.600zM9.800 6.300h1.600v1.600h-1.600z" fill="#9a9a9a"/>
 <path d="M6.300 2.200V10" stroke="#aaa" stroke-width=".7"/>
</svg>
<svg style="left:327px;top:136.6px;" width="14" height="10.6" preserveAspectRatio="none" viewBox="0 0 14 11">
 <rect x=".5" y=".5" width="12.300" height="9.600" fill="#fdfdfd" stroke="#8a8a8a" stroke-width="1"/>
 <rect x="1" y="1" width="11.300" height="1.200" fill="#b5b5b5"/>
 <path d="M7 2.200V10M7 6h5.800" stroke="#888" stroke-width=".9"/>
 <rect x="9.200" y="3.500" width="1.600" height="1.200" fill="#999"/>
</svg>
<svg style="left:902.600px;top:134.500px;" width="15" height="14" viewBox="0 0 15 14">
 <circle cx="8.300" cy="7.300" r="5.300" fill="#fafbfc" stroke="#555" stroke-width=".9"/>
 <path d="M8.300 4.200 V7.500 H11" fill="none" stroke="#555" stroke-width=".9"/>
 <path d="M1 6.200 L4.800 2.500 M1.200 8.800 L3.200 7.200" stroke="#666" stroke-width=".8"/>
</svg>
<svg style="left:996px;top:140px;" width="6" height="5" viewBox="0 0 6 5"><path d="M.6 1 L5.400 1 L3 4 Z" fill="#333"/></svg>
<svg style="left:1012px;top:136.6px;" width="14" height="10.6" preserveAspectRatio="none" viewBox="0 0 14 11">
 <rect x=".5" y=".5" width="12.300" height="9.600" fill="#fdfdfd" stroke="#8a8a8a" stroke-width="1"/>
 <rect x="1" y="1" width="11.300" height="1.400" fill="#b5b5b5"/>
 <path d="M2.300 4.500h2M5.500 4.500h5.800M2.300 6.300h2M5.500 6.300h5.800M2.300 8.100h2M5.500 8.100h5.800" stroke="#aaa" stroke-width=".8"/>
</svg>
<!-- breadcrumb icons -->
<svg style="left:210.700px;top:161.500px;" width="8" height="10" viewBox="0 0 8 10"><path d="M6.800 .8 L6.800 8.800 L.8 4.800 Z" fill="#444"/></svg>
<svg style="left:290.700px;top:159.500px;" width="8" height="13" viewBox="0 0 8 13"><path d="M1.800 .8 L5.800 6.500 L1.800 12.200" fill="none" stroke="#5f63b5" stroke-width=".9"/></svg>
<svg style="left:388px;top:159.500px;" width="8" height="13" viewBox="0 0 8 13"><path d="M1.800 .8 L5.800 6.500 L1.800 12.200" fill="none" stroke="#5f63b5" stroke-width=".9"/></svg>
<svg style="left:231.500px;top:184.500px;" width="8" height="5" viewBox="0 0 8 5"><path d="M.8 3.800 L3.700 .8 L6.600 3.800 Z" fill="#9a9a9a"/></svg>

<!-- paging icons -->
<svg style="left:205.500px;top:531.500px;" width="17" height="17" viewBox="0 0 17 17"><path d="M4.600 4.800h1.500v7.400h-1.500z M11.800 4.800 L11.800 12.200 L6.600 8.500 Z" fill="#b3b7be"/></svg>
<svg style="left:227.800px;top:531.500px;" width="17" height="17" viewBox="0 0 17 17"><path d="M10.800 4.800 L10.800 12.200 L5.600 8.500 Z" fill="#b3b7be"/></svg>
<svg style="left:319px;top:531.500px;" width="17" height="17" viewBox="0 0 17 17"><path d="M6.400 4.800 L6.400 12.200 L11.600 8.500 Z" fill="#b3b7be"/></svg>
<svg style="left:350px;top:534px;" width="14" height="13" viewBox="0 0 14 13">
 <path d="M2.200 6 A4.600 4.200 0 0 1 10.300 3.600 M11.600 7 A4.600 4.200 0 0 1 3.500 9.400" fill="none" stroke="#6a6a6a" stroke-width="1.500"/>
 <path d="M8.300 4.600 L12.300 4.800 L12 1 Z M5.500 8.400 L1.500 8.200 L1.800 12 Z" fill="#6a6a6a"/>
</svg>

<!--RESTEND-->

</div></div>
</body>
</html>
